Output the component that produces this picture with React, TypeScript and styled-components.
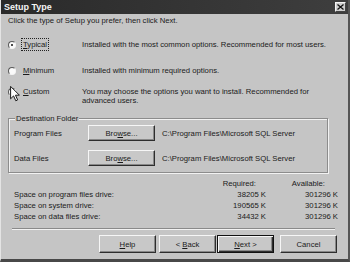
import { Fragment } from "react";
import styled, { createGlobalStyle } from "styled-components";

const GlobalStyle = createGlobalStyle`
  html, body {
    margin: 0;
    padding: 0;
    background: #c5c5c5;
  }
`;

const Window = styled.div`
  position: relative;
  width: 350px;
  height: 262px;
  box-sizing: border-box;
  background: #c5c5c5;
  border-left: 1px solid #e4e4e4;
  border-right: 2px solid #555;
  border-bottom: 3px solid #484848;
  display: flex;
  flex-direction: column;
  font-family: "Liberation Sans", Arial, sans-serif;
  font-size: 7.7px;
  color: #1a1a1a;
  overflow: hidden;
`;

const TitleBar = styled.div`
  height: 14px;
  flex: none;
  display: flex;
  align-items: center;
  justify-content: space-between;
  padding: 0 2px 0 3px;
  background: linear-gradient(90deg, #2a2a2a, #3e3e3e);
`;

const Title = styled.span`
  color: #f4f4f4;
  font-weight: bold;
  font-size: 9px;
`;

const CloseBox = styled.div`
  width: 11px;
  height: 10px;
  box-sizing: border-box;
  background: #cfcfcf;
  border: 1px solid;
  border-color: #f4f4f4 #444 #444 #f4f4f4;
  display: flex;
  align-items: center;
  justify-content: center;
`;

const Body = styled.div`
  flex: 1;
  display: flex;
  flex-direction: column;
  padding: 0 10px 0 7px;
`;

const Intro = styled.div`
  margin-top: 2px;
  line-height: 10px;
`;

const OptionRow = styled.div<{ $top: number }>`
  display: grid;
  grid-template-columns: 74px 1fr;
  align-items: start;
  margin-top: ${(p) => p.$top}px;
  line-height: 9px;
`;

const Choice = styled.div`
  display: flex;
  align-items: center;
`;

const Radio = styled.span<{ $checked?: boolean }>`
  width: 8px;
  height: 8px;
  box-sizing: border-box;
  border-radius: 50%;
  border: 1px solid;
  border-color: #5a5a5a #f4f4f4 #f4f4f4 #5a5a5a;
  background: #fafafa;
  margin-right: 5px;
  display: flex;
  align-items: center;
  justify-content: center;
  &::after {
    content: "";
    width: 2px;
    height: 2px;
    border-radius: 50%;
    background: ${(p) => (p.$checked ? "#111" : "transparent")};
  }
`;

const ChoiceLabel = styled.span<{ $focus?: boolean }>`
  padding: 1px 1px;
  border: 1px dotted ${(p) => (p.$focus ? "#222" : "transparent")};
`;

const Key = styled.span`
  text-decoration: underline;
`;

const Description = styled.div`
  margin-top: 2px;
`;

const GroupBox = styled.div`
  width: 320px;
  box-sizing: border-box;
  margin-top: 13px;
  border: 1px solid #8c8c8c;
  box-shadow: inset 1px 1px 0 #f2f2f2, 1px 1px 0 #f2f2f2;
  padding: 0 5px 6px 5px;
  display: flex;
  flex-direction: column;
`;

const Legend = styled.span`
  align-self: flex-start;
  margin: -5px 0 0 1px;
  padding: 0 1px;
  line-height: 9px;
  background: #c5c5c5;
`;

const FolderRow = styled.div<{ $top: number }>`
  display: flex;
  align-items: center;
  height: 16px;
  margin-top: ${(p) => p.$top}px;
`;

const FolderLabel = styled.span`
  width: 74px;
  flex: none;
`;

const Button = styled.button<{ $width: number; $height: number; $gap?: number; $default?: boolean }>`
  width: ${(p) => p.$width}px;
  height: ${(p) => p.$height}px;
  margin-left: ${(p) => p.$gap ?? 0}px;
  box-sizing: border-box;
  padding: 0;
  font-family: "Liberation Sans", Arial, sans-serif;
  font-size: 7.7px;
  color: #1a1a1a;
  background: #c8c8c8;
  border: 1px solid;
  border-color: ${(p) => (p.$default ? "#111" : "#f6f6f6 #2e2e2e #2e2e2e #f6f6f6")};
  box-shadow: ${(p) =>
    p.$default
      ? "inset 1px 1px 0 #f6f6f6, inset -1px -1px 0 #2e2e2e, inset -2px -2px 0 #888"
      : "inset -1px -1px 0 #888"};
`;

const Path = styled.span`
  margin-left: 7px;
`;

const SpaceTable = styled.div`
  display: grid;
  grid-template-columns: 1fr 66px 72px;
  grid-auto-rows: 11px;
  align-items: center;
  margin: 5px 0 0 6px;
`;

const Cell = styled.span<{ $pad?: number }>`
  text-align: ${(p) => (p.$pad === undefined ? "left" : "right")};
  padding-right: ${(p) => p.$pad ?? 0}px;
`;

const Separator = styled.div`
  margin: 6px 3px 0 4px;
  border-top: 1px solid #8a8a8a;
  border-bottom: 1px solid #f2f2f2;
`;

const ButtonRow = styled.div`
  display: flex;
  justify-content: flex-end;
  margin: 5px 1px 0 0;
`;

const Cursor = styled.svg`
  position: absolute;
  left: 9px;
  top: 86px;
`;

const spaces = [
  { label: "Space on program files drive:", required: "38205 K", available: "301296 K" },
  { label: "Space on system drive:", required: "190565 K", available: "301296 K" },
  { label: "Space on data files drive:", required: "34432 K", available: "301296 K" },
];

export default function App() {
  return (
    <>
      <GlobalStyle />
      <Window>
        <TitleBar>
          <Title>Setup Type</Title>
          <CloseBox>
            <svg width="7" height="6" viewBox="0 0 7 6">
              <path d="M0.5 0.5 L6.5 5.5 M6.5 0.5 L0.5 5.5" stroke="#111" strokeWidth="1.3" />
            </svg>
          </CloseBox>
        </TitleBar>
        <Body>
          <Intro>Click the type of Setup you prefer, then click Next.</Intro>

          <OptionRow $top={12}>
            <Choice>
              <Radio $checked />
              <ChoiceLabel $focus>
                <Key>T</Key>ypical
              </ChoiceLabel>
            </Choice>
            <Description>Installed with the most common options. Recommended for most users.</Description>
          </OptionRow>
          <OptionRow $top={13}>
            <Choice>
              <Radio />
              <ChoiceLabel>
                <Key>M</Key>inimum
              </ChoiceLabel>
            </Choice>
            <Description>Installed with minimum required options.</Description>
          </OptionRow>
          <OptionRow $top={8}>
            <Choice>
              <Radio />
              <ChoiceLabel>
                <Key>C</Key>ustom
              </ChoiceLabel>
            </Choice>
            <Description>
              You may choose the options you want to install. Recommended for
              <br />
              advanced users.
            </Description>
          </OptionRow>

          <GroupBox>
            <Legend>Destination Folder</Legend>
            <FolderRow $top={2}>
              <FolderLabel>Program Files</FolderLabel>
              <Button $width={67} $height={16}>
                Bro<Key>w</Key>se...
              </Button>
              <Path>C:\Program Files\Microsoft SQL Server</Path>
            </FolderRow>
            <FolderRow $top={9}>
              <FolderLabel>Data Files</FolderLabel>
              <Button $width={67} $height={16}>
                Bro<Key>w</Key>se...
              </Button>
              <Path>C:\Program Files\Microsoft SQL Server</Path>
            </FolderRow>
          </GroupBox>

          <SpaceTable>
            <span />
            <Cell $pad={10}>Required:</Cell>
            <Cell $pad={13}>Available:</Cell>
            {spaces.map((s) => (
              <Fragment key={s.label}>
                <Cell>{s.label}</Cell>
                <Cell $pad={0}>{s.required}</Cell>
                <Cell $pad={0}>{s.available}</Cell>
              </Fragment>
            ))}
          </SpaceTable>

          <Separator />

          <ButtonRow>
            <Button $width={57} $height={18}>
              <Key>H</Key>elp
            </Button>
            <Button $width={57} $height={18} $gap={3}>
              &lt; <Key>B</Key>ack
            </Button>
            <Button $width={57} $height={18} $gap={1} $default>
              <Key>N</Key>ext &gt;
            </Button>
            <Button $width={57} $height={18} $gap={6}>
              Cancel
            </Button>
          </ButtonRow>
        </Body>

        <Cursor width="10" height="16" viewBox="0 0 12 20">
          <path
            d="M0.5 0.5 L0.5 16 L4.2 12.4 L7 18.5 L9.3 17.4 L6.6 11.5 L11.5 11.5 Z"
            fill="#fff"
            stroke="#111"
            strokeWidth="1.2"
            strokeLinejoin="round"
          />
        </Cursor>
      </Window>
    </>
  );
}
